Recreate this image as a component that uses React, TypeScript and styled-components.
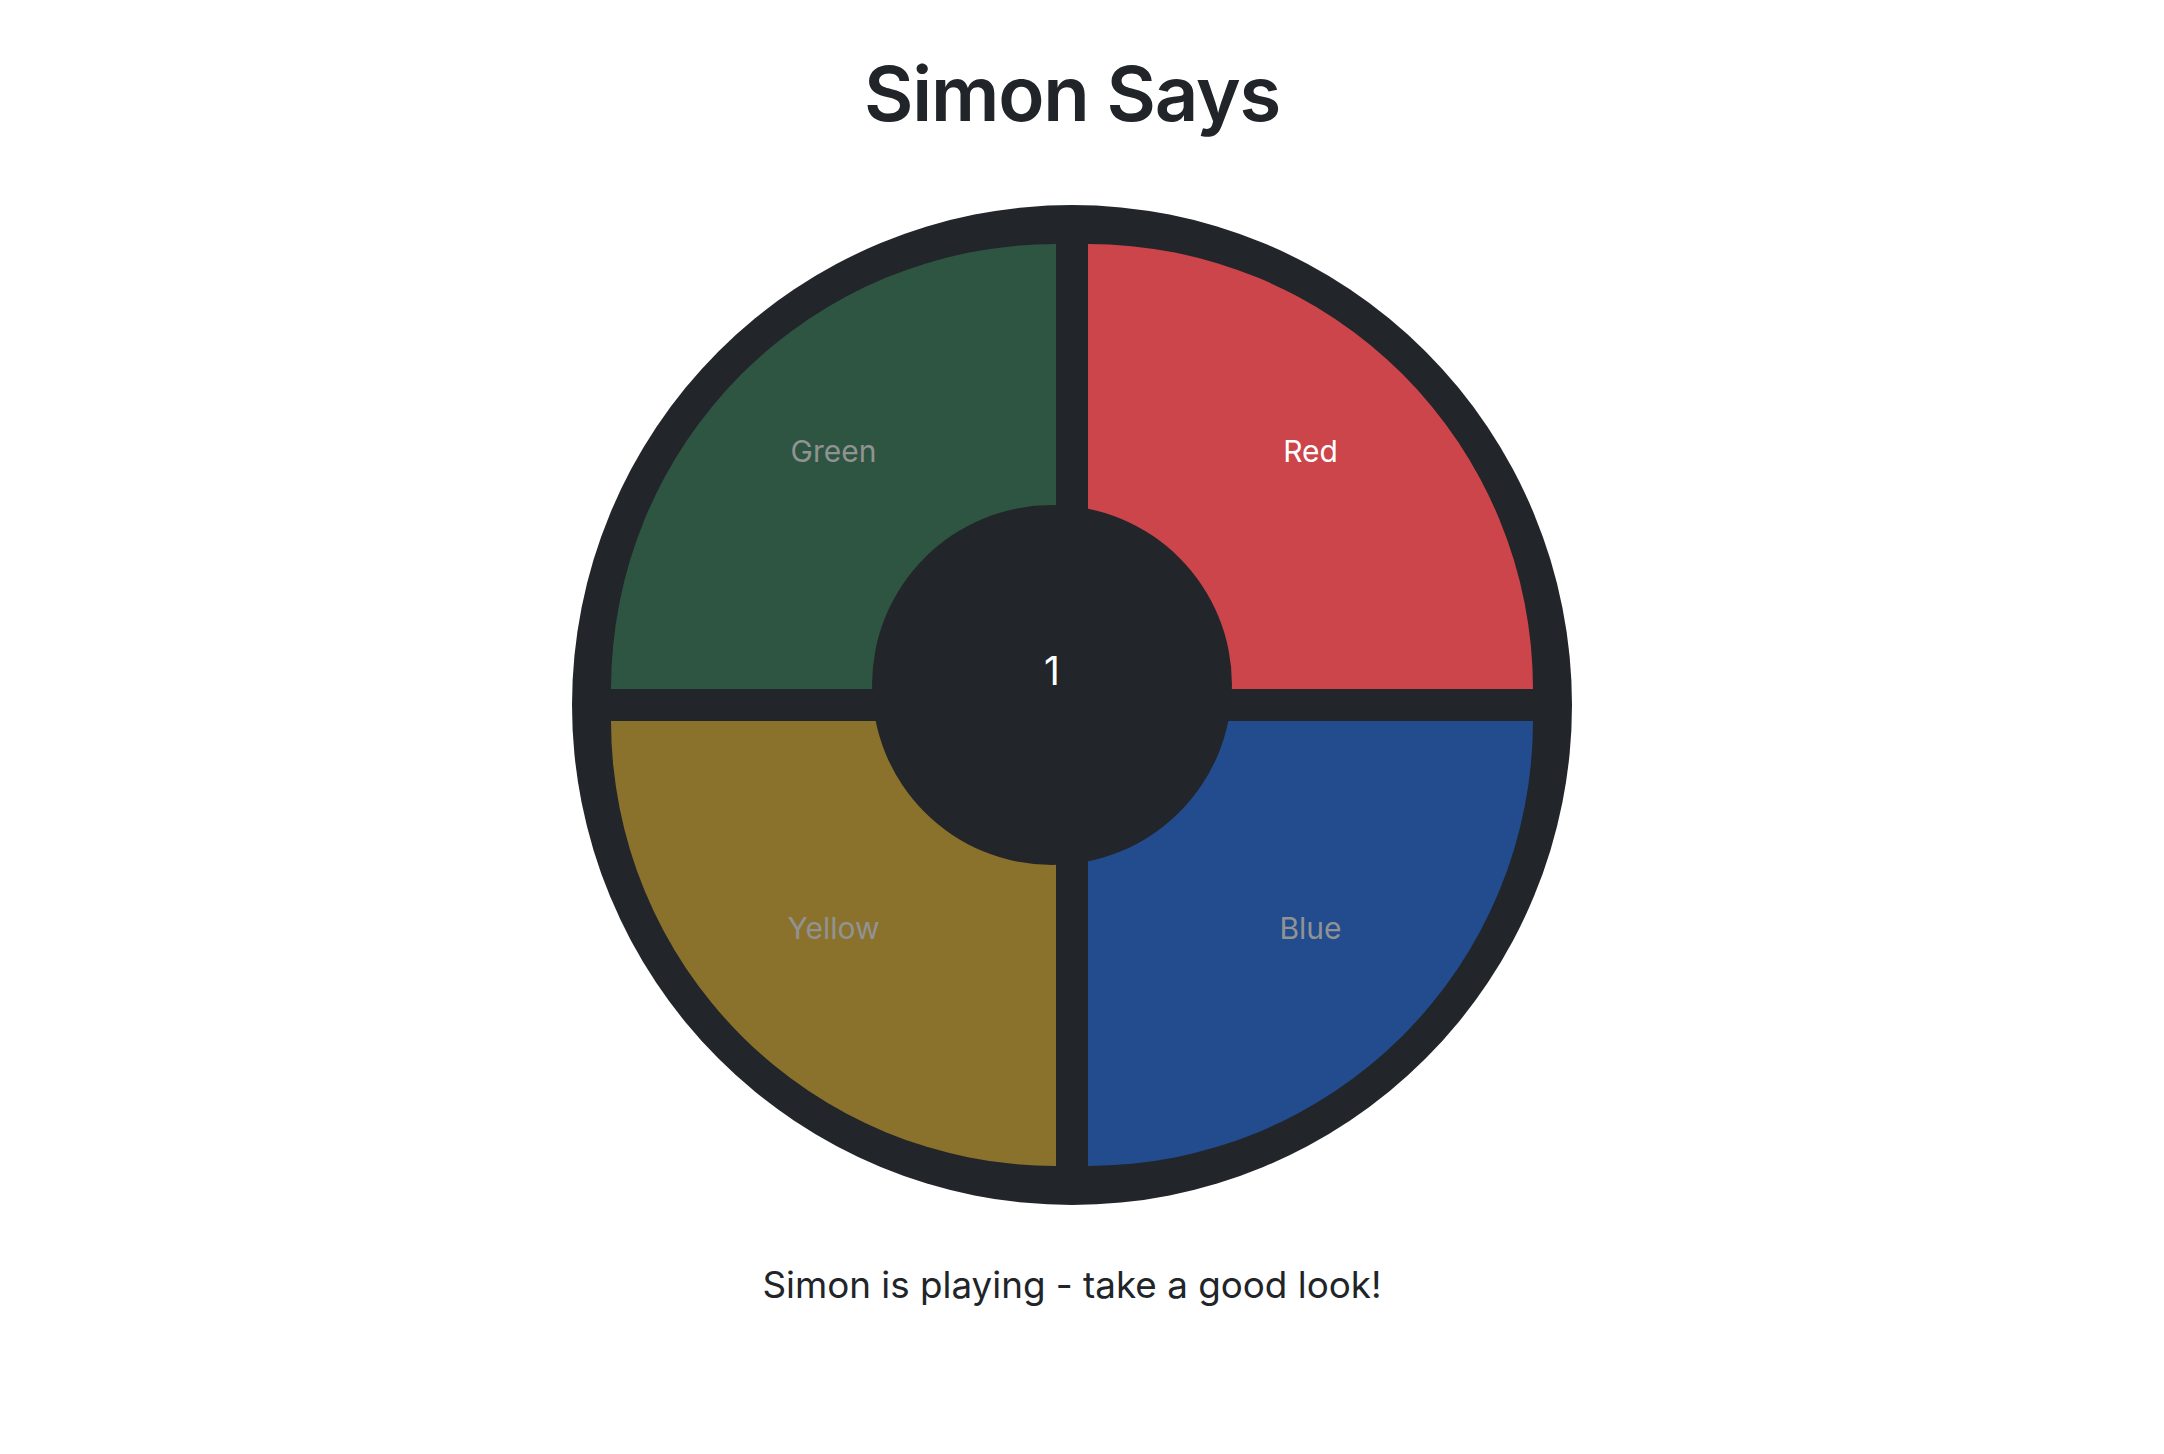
import React from "react";
import styled, { createGlobalStyle } from "styled-components";

const GlobalStyle = createGlobalStyle`
  html, body {
    margin: 0;
    padding: 0;
    background: #ffffff;
  }
  body {
    font-family: Inter, "Noto Sans", "Liberation Sans", sans-serif;
    color: #212529;
  }
`;

const Page = styled.main`
  display: flex;
  flex-direction: column;
  align-items: center;
  padding-right: 20px;
  padding-top: 45px;
`;

const Title = styled.h1`
  margin: 0;
  font-size: 76px;
  line-height: 96px;
  font-weight: 600;
  letter-spacing: -1.2px;
  color: #212529;
`;

const Board = styled.div`
  position: relative;
  box-sizing: border-box;
  margin-top: 64px;
  width: 1000px;
  height: 1000px;
  padding: 39px;
  border-radius: 50%;
  background: #222529;
  display: grid;
  grid-template-columns: 1fr 1fr;
  grid-template-rows: 1fr 1fr;
  gap: 32px;
`;

type Corner = "tl" | "tr" | "bl" | "br";

const radiusFor = (c: Corner) => {
  switch (c) {
    case "tl":
      return "border-top-left-radius: 100%;";
    case "tr":
      return "border-top-right-radius: 100%;";
    case "bl":
      return "border-bottom-left-radius: 100%;";
    default:
      return "border-bottom-right-radius: 100%;";
  }
};

const Pad = styled.button<{ $bg: string; $corner: Corner; $active?: boolean }>`
  border: none;
  margin: 0;
  padding: 0 0 32px 0;
  background: ${(p) => p.$bg};
  ${(p) => radiusFor(p.$corner)}
  display: flex;
  align-items: center;
  justify-content: center;
  font-family: Inter, "Noto Sans", "Liberation Sans", sans-serif;
  font-size: 30px;
  font-weight: 400;
  color: ${(p) => (p.$active ? "#ffffff" : "#919393")};
  cursor: pointer;
`;

const Hub = styled.div`
  position: absolute;
  left: 300px;
  top: 300px;
  width: 360px;
  height: 360px;
  border-radius: 50%;
  background: #222529;
  display: flex;
  align-items: center;
  justify-content: center;
  box-sizing: border-box;
  padding-bottom: 30px;
  color: #ffffff;
  font-size: 39px;
  font-weight: 400;
`;

const Status = styled.p`
  margin: 52px 0 0 0;
  font-size: 36.8px;
  line-height: 56px;
  color: #212529;
`;

export default function App() {
  return (
    <>
      <GlobalStyle />
      <Page>
        <Title>Simon Says</Title>
        <Board>
          <Pad $bg="#2e5542" $corner="tl">Green</Pad>
          <Pad $bg="#cc454b" $corner="tr" $active>
            Red
          </Pad>
          <Pad $bg="#8a722c" $corner="bl">Yellow</Pad>
          <Pad $bg="#234c8f" $corner="br">Blue</Pad>
          <Hub>1</Hub>
        </Board>
        <Status>Simon is playing - take a good look!</Status>
      </Page>
    </>
  );
}
